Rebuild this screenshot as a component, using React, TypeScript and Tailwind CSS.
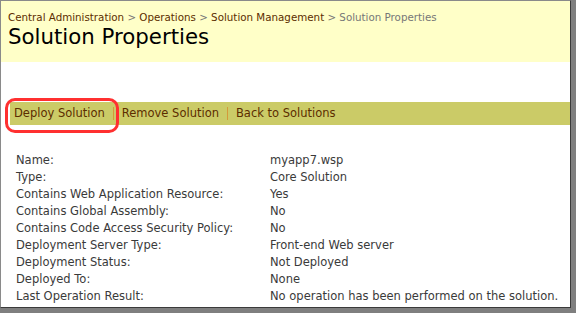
const rows: [string, string][] = [
  ["Name:", "myapp7.wsp"],
  ["Type:", "Core Solution"],
  ["Contains Web Application Resource:", "Yes"],
  ["Contains Global Assembly:", "No"],
  ["Contains Code Access Security Policy:", "No"],
  ["Deployment Server Type:", "Front-end Web server"],
  ["Deployment Status:", "Not Deployed"],
  ["Deployed To:", "None"],
  ["Last Operation Result:", "No operation has been performed on the solution."],
];

function Sep() {
  return <span className="mx-[8px] h-[13px] w-px bg-[#d49a3a]" />;
}

export default function App() {
  return (
    <div
      className="h-[313px] w-[576px] bg-[#7f7f7f] text-[10px]"
      style={{ fontFamily: '"DejaVu Sans", Tahoma, sans-serif' }}
    >
      <div className="relative h-[308px] w-[571px] border-l border-t border-[#8a8a8a] border-r border-b border-r-[#3a3a3a] border-b-[#3a3a3a] bg-white">
        {/* title area */}
        <div className="h-[61px] bg-[#ffffc8] pl-[7px] pt-[9px]">
          <div className="text-[10.3px] leading-[14px] text-[#5c2d00]">
            Central Administration <span className="text-[#777]">&gt;</span> Operations{" "}
            <span className="text-[#777]">&gt;</span> Solution Management{" "}
            <span className="text-[#777]">&gt; Solution Properties</span>
          </div>
          <div className="mt-[1px] text-[21.3px] leading-[24px] text-black">Solution Properties</div>
        </div>

        {/* toolbar */}
        <div className="mt-[40px] ml-[9px] flex h-[23px] items-center bg-[#cbcb67] pl-[4px] text-[11.5px] text-[#5c2d00]">
          <span>Deploy Solution</span>
          <Sep />
          <span>Remove Solution</span>
          <Sep />
          <span>Back to Solutions</span>
        </div>

        {/* highlight */}
        <div className="absolute left-[4px] top-[97px] h-[35px] w-[114px] rounded-[10px] border-[3px] border-[#ff3030]" />

        {/* properties */}
        <div className="mt-[27px] pl-[15px] text-[11.5px] text-[#3a3a3a]">
          {rows.map(([k, v]) => (
            <div key={k} className="flex h-[17px] items-center">
              <span className="w-[254px]">{k}</span>
              <span>{v}</span>
            </div>
          ))}
        </div>
      </div>
    </div>
  );
}
